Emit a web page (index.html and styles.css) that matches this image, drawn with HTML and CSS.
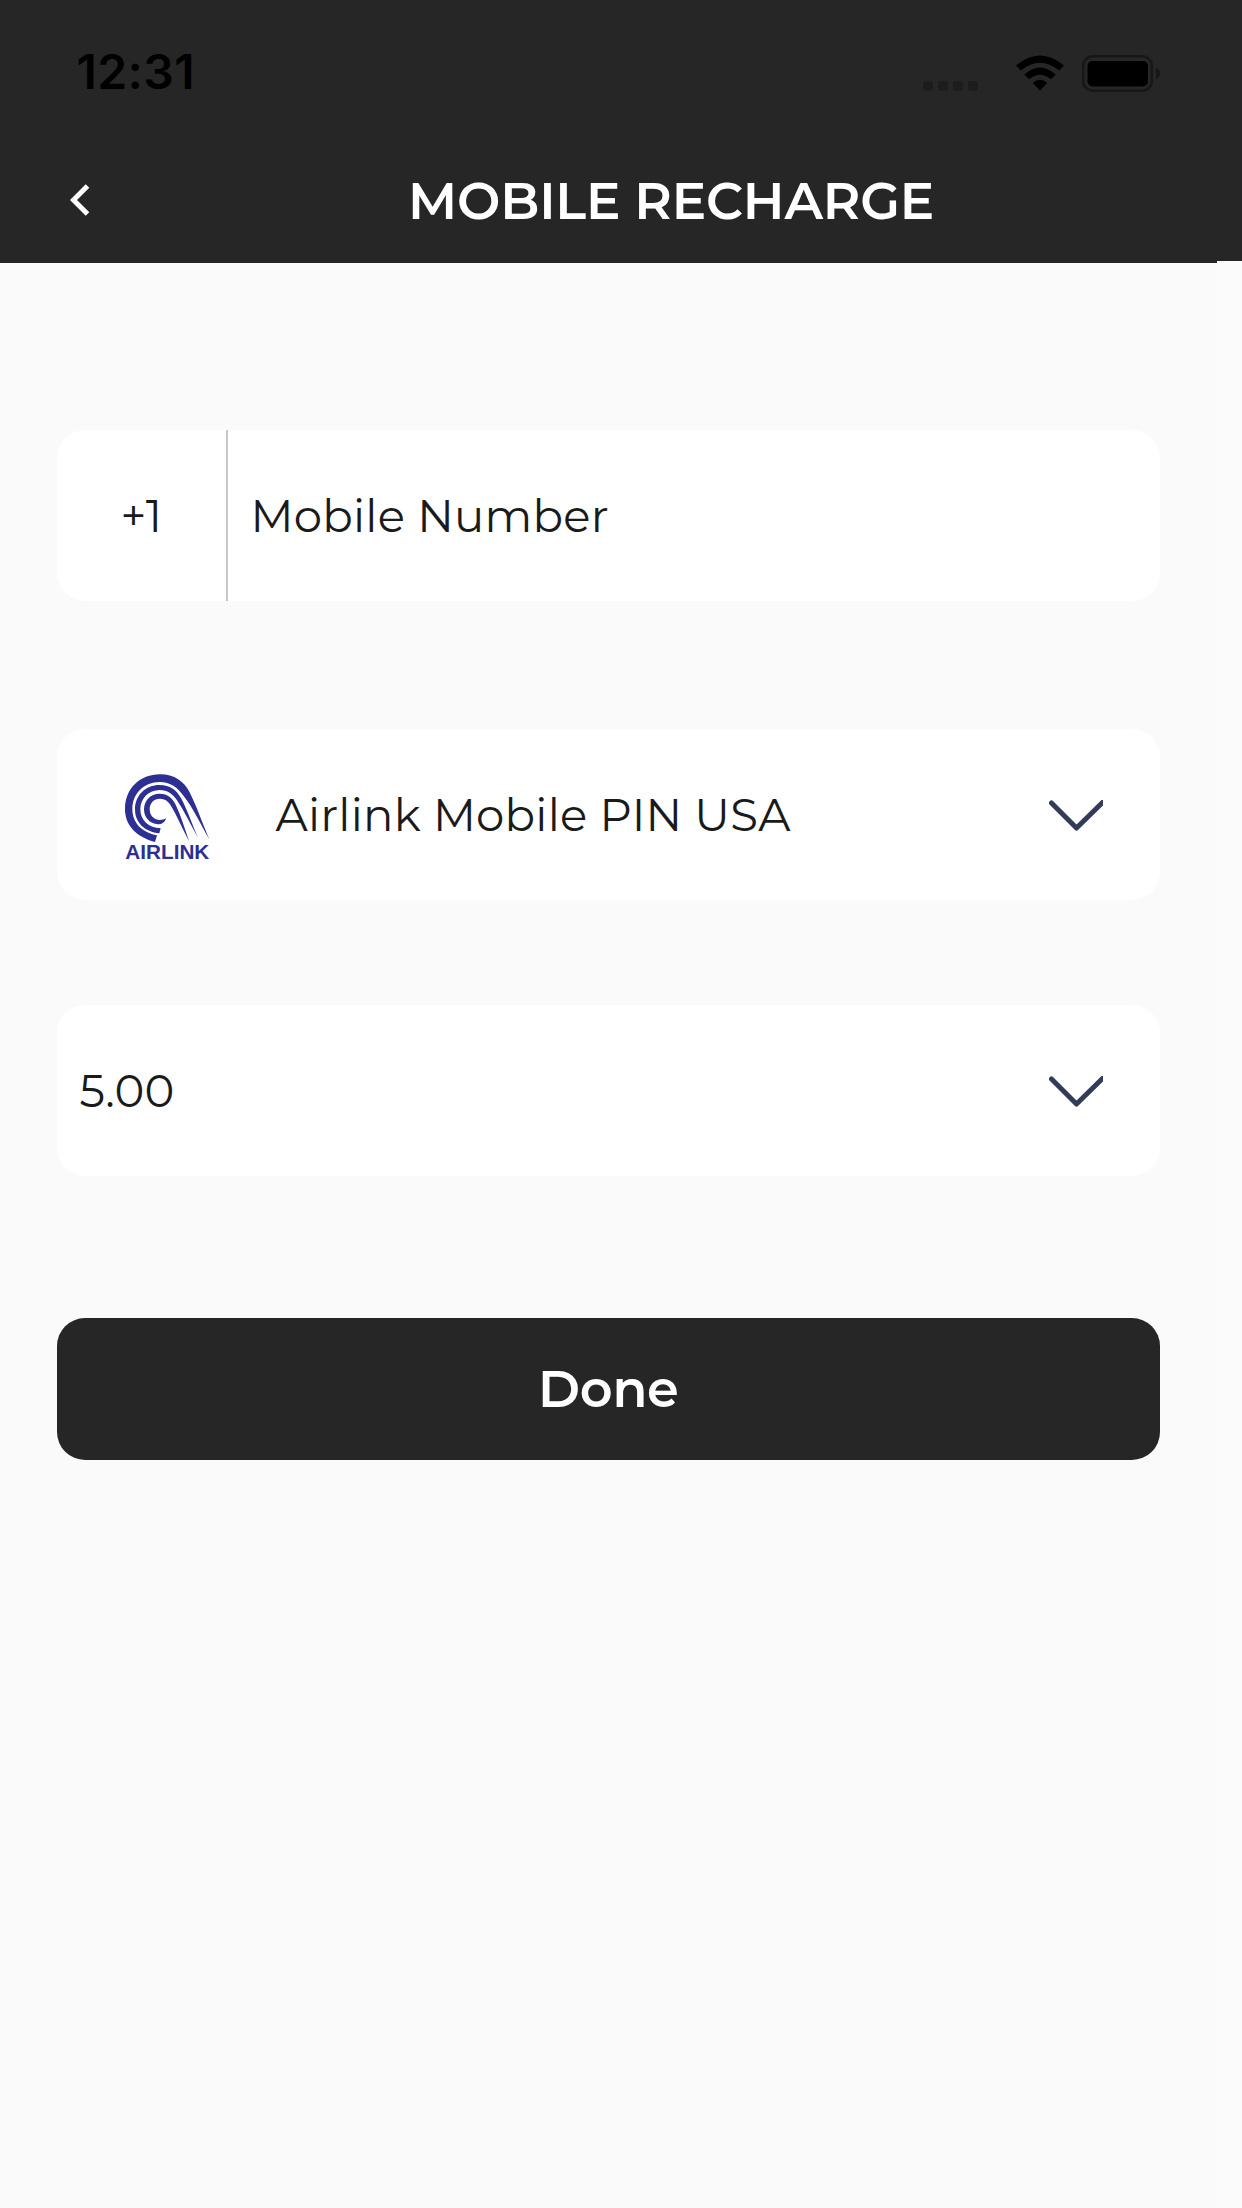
FILE: index.html
```html
<!DOCTYPE html>
<html lang="en">
<head>
  <meta charset="UTF-8" />
  <meta name="viewport" content="width=device-width, initial-scale=1.0" />
  <title>Mobile Recharge</title>
  <link rel="stylesheet" href="styles.css">
</head>
<body>
  <header>
    <div class="status-bar">
      <span class="time">12:31</span>
      <div class="dots"><i></i><i></i><i></i><i></i></div>
      <svg class="wifi" viewBox="0 0 48 36">
        <path d="M0 10.500Q24 -9.500 48 10.500L43.300 15.500Q24 0 4.700 15.500Z" />
        <path d="M8.300 19.500Q24 5.500 39.700 19.500L34.900 24.300Q24 15 13.100 24.300Z" />
        <path d="M16.800 28Q24 21.500 31.200 28L24 35.500Z" />
      </svg>
      <svg class="battery" viewBox="0 0 78 37">
        <rect class="shell" x="1.250" y="1.250" width="68.500" height="34.500" rx="9.500" />
        <rect x="5.500" y="6" width="60.500" height="25.500" rx="5" />
        <path class="nub" d="M74 12.500Q78 15 78 18.500Q78 22 74 24.500Z" />
      </svg>
    </div>
    <div class="title-bar">
      <svg class="back" viewBox="0 0 20 32"><path d="M17.500 2L3.500 16L17.500 30" /></svg>
      <h1>MOBILE RECHARGE</h1>
    </div>
  </header>

  <main>
    <div class="field phone">
      <div class="code"><span>+1</span></div>
      <span class="number">Mobile Number</span>
    </div>

    <div class="field operator">
      <svg class="logo" viewBox="60 60 288 288">
        <path d="M165 273C107 257 75 222 75 174C75 113 120 70 180 70C223 70 253 91 270 126C291 168 308 219 328 265C302 220 280 172 251 135C233 109 211 93 179 93C132 93 97 128 97 174C97 217 127 244 171 253Z" />
        <path d="M178 247C135 243 105 216 105 175C105 133 137 102 179 102C210 102 229 117 243 141C263 178 277 223 295 262C272 222 254 182 231 148C218 128 202 117 179 117C146 117 121 142 121 175C121 208 146 231 182 232Z" />
        <path d="M198 202C195 215 185 220 174 220C149 218 132 200 132 175C132 148 152 128 179 128C203 128 217 141 227 161C244 196 255 236 268 272C247 232 231 194 211 161C203 149 194 143 180 143C161 143 149 157 149 175C149 195 163 207 180 207C187 207 192 206 198 202Z" />
        <text x="76" y="323" textLength="252" lengthAdjust="spacingAndGlyphs">AIRLINK</text>
      </svg>
      <span class="operator-name">Airlink Mobile PIN USA</span>
      <svg class="chevron" viewBox="0 0 54 32"><path d="M2.500 3L27.500 28L54 2" /></svg>
    </div>

    <div class="field amount">
      <span class="price">5.00</span>
      <svg class="chevron" viewBox="0 0 54 32"><path d="M2.500 3L27.500 28L54 2" /></svg>
    </div>

    <button class="done">Done</button>
  </main>
</body>
</html>
```

FILE: styles.css
```css
* {
  box-sizing: border-box;
}
body {
  font-family: Montserrat, Inter, sans-serif;
  margin: 0;
  min-height: 2208px;
  background: linear-gradient(to right, #fafafa 1217px, #fbfbfb 1217px);
  color: #1a1a1a;
}
svg {
  display: block;
  flex: none;
}
header {
  height: 263px;
  background: linear-gradient(#262626, #262626) 0 0 / 100% 261px no-repeat,
    linear-gradient(#262626, #262626) 0 0 / 1217px 263px no-repeat;
}
.status-bar {
  height: 146px;
  padding: 0 82.5px 0 76.5px;
  display: flex;
  align-items: center;
}
.time {
  font-family: Inter, sans-serif;
  font-size: 48px;
  font-weight: 600;
  letter-spacing: 0.4px;
  line-height: 56px;
  margin-top: -2px;
  color: #000;
}
.dots {
  display: flex;
  gap: 5px;
  margin: 25px 37.5px 0 auto;
}
.dots i {
  width: 10px;
  height: 10px;
  border-radius: 3px;
  background: #1d1d1d;
}
.wifi {
  width: 48px;
  height: 36px;
}
.battery {
  width: 78px;
  height: 37px;
  margin-left: 18px;
}
.battery .shell {
  fill: none;
  stroke: #171717;
  stroke-width: 2.5;
}
.battery .nub {
  fill: #171717;
}
.title-bar {
  height: 108px;
  padding-left: 70px;
  display: flex;
  align-items: center;
}
.back {
  width: 20px;
  height: 32px;
}
.back path {
  fill: none;
  stroke: #fff;
  stroke-width: 5;
}
h1 {
  margin: 0 0 0 318px;
  font-size: 51.5px;
  font-weight: 600;
  letter-spacing: -0.2px;
  color: #fff;
  white-space: nowrap;
}
main {
  width: 1217px;
  padding: 167px 57px 0 56.5px;
}
.field {
  height: 171px;
  background: #fff;
  border-radius: 28px;
  display: flex;
  align-items: center;
  font-size: 45px;
  font-weight: 400;
  letter-spacing: 0.25px;
  white-space: nowrap;
}
.code {
  width: 171.5px;
  height: 171px;
  padding-left: 64px;
  border-right: 2px solid #c8c8c8;
  display: flex;
  align-items: center;
}
.number {
  margin: -1px 0 0 22.5px;
}
.operator {
  margin-top: 128px;
}
.logo {
  width: 96px;
  height: 96px;
  margin: 8px 0 0 63px;
  fill: #2d2f92;
}
.logo text {
  font: bold 63px "Liberation Sans", Arial, sans-serif;
  letter-spacing: 0;
}
.operator-name {
  margin: -1px 0 0 60px;
}
.chevron {
  width: 54px;
  height: 32px;
  margin: 3px 57px 0 auto;
}
.chevron path {
  fill: none;
  stroke: #333c57;
  stroke-width: 5;
  stroke-linecap: round;
  stroke-linejoin: round;
}
.amount {
  margin-top: 105px;
}
.price {
  margin-left: 23px;
}
.done {
  display: block;
  width: 100%;
  height: 142px;
  margin-top: 142.4px;
  padding: 0;
  border: none;
  border-radius: 28px;
  background: #262626;
  color: #fff;
  font-family: inherit;
  font-size: 51px;
  font-weight: 600;
  letter-spacing: -0.3px;
}
```
